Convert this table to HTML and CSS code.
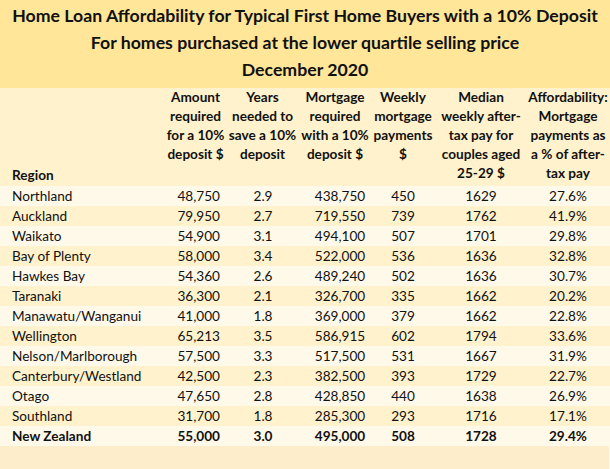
FILE: index.html
```html
<!DOCTYPE html>
<html lang="en">
<head>
<meta charset="utf-8">
<title>Home Loan Affordability</title>
<link rel="stylesheet" href="styles.css">
</head>
<body>
<div class="sheet">
  <div class="title-band">
    <div class="title-line">Home Loan Affordability for Typical First Home Buyers with a 10% Deposit</div>
    <div class="title-line">For homes purchased at the lower quartile selling price</div>
    <div class="title-line">December 2020</div>
  </div>
  <table class="data">
    <colgroup>
      <col class="c-region"><col class="c-amount"><col class="c-years"><col class="c-mort"><col class="c-weekly"><col class="c-median"><col class="c-aff">
    </colgroup>
    <thead>
      <tr class="head">
        <th class="region">Region</th>
        <th>Amount<br>required<br>for a 10%<br>deposit $</th>
        <th>Years<br>needed to<br>save a 10%<br>deposit</th>
        <th>Mortgage<br>required<br>with a 10%<br>deposit $</th>
        <th>Weekly<br>mortgage<br>payments<br>$</th>
        <th>Median<br>weekly after-<br>tax pay for<br>couples aged<br>25-29 $</th>
        <th>Affordability:<br>Mortgage<br>payments as<br>a % of after-<br>tax pay</th>
      </tr>
    </thead>
    <tbody>
      <tr class="light"><td class="region">Northland</td><td class="amt">48,750</td><td class="yrs">2.9</td><td class="mort">438,750</td><td class="wk">450</td><td class="med">1629</td><td class="aff">27.6%</td></tr>
      <tr class="dark"><td class="region">Auckland</td><td class="amt">79,950</td><td class="yrs">2.7</td><td class="mort">719,550</td><td class="wk">739</td><td class="med">1762</td><td class="aff">41.9%</td></tr>
      <tr class="light"><td class="region">Waikato</td><td class="amt">54,900</td><td class="yrs">3.1</td><td class="mort">494,100</td><td class="wk">507</td><td class="med">1701</td><td class="aff">29.8%</td></tr>
      <tr class="dark"><td class="region">Bay of Plenty</td><td class="amt">58,000</td><td class="yrs">3.4</td><td class="mort">522,000</td><td class="wk">536</td><td class="med">1636</td><td class="aff">32.8%</td></tr>
      <tr class="light"><td class="region">Hawkes Bay</td><td class="amt">54,360</td><td class="yrs">2.6</td><td class="mort">489,240</td><td class="wk">502</td><td class="med">1636</td><td class="aff">30.7%</td></tr>
      <tr class="dark"><td class="region">Taranaki</td><td class="amt">36,300</td><td class="yrs">2.1</td><td class="mort">326,700</td><td class="wk">335</td><td class="med">1662</td><td class="aff">20.2%</td></tr>
      <tr class="light"><td class="region">Manawatu/Wanganui</td><td class="amt">41,000</td><td class="yrs">1.8</td><td class="mort">369,000</td><td class="wk">379</td><td class="med">1662</td><td class="aff">22.8%</td></tr>
      <tr class="dark"><td class="region">Wellington</td><td class="amt">65,213</td><td class="yrs">3.5</td><td class="mort">586,915</td><td class="wk">602</td><td class="med">1794</td><td class="aff">33.6%</td></tr>
      <tr class="light"><td class="region">Nelson/Marlborough</td><td class="amt">57,500</td><td class="yrs">3.3</td><td class="mort">517,500</td><td class="wk">531</td><td class="med">1667</td><td class="aff">31.9%</td></tr>
      <tr class="dark"><td class="region">Canterbury/Westland</td><td class="amt">42,500</td><td class="yrs">2.3</td><td class="mort">382,500</td><td class="wk">393</td><td class="med">1729</td><td class="aff">22.7%</td></tr>
      <tr class="light"><td class="region">Otago</td><td class="amt">47,650</td><td class="yrs">2.8</td><td class="mort">428,850</td><td class="wk">440</td><td class="med">1638</td><td class="aff">26.9%</td></tr>
      <tr class="dark"><td class="region">Southland</td><td class="amt">31,700</td><td class="yrs">1.8</td><td class="mort">285,300</td><td class="wk">293</td><td class="med">1716</td><td class="aff">17.1%</td></tr>
      <tr class="light total"><td class="region">New Zealand</td><td class="amt">55,000</td><td class="yrs">3.0</td><td class="mort">495,000</td><td class="wk">508</td><td class="med">1728</td><td class="aff">29.4%</td></tr>
    </tbody>
  </table>
</div>
</body>
</html>
```

FILE: styles.css
```css
html, body {
  margin: 0;
  padding: 0;
}

body {
  width: 610px;
  height: 469px;
  overflow: hidden;
  background: #fdedca;
  font-family: Lato, "Noto Sans", "Liberation Sans", sans-serif;
  color: #111111;
}

.sheet {
  width: 610px;
  height: 469px;
  background: #fdedca;
  box-shadow: inset -1px 0 #fff9ec;
}

.title-band {
  background: #ffe699;
  height: 88px;
  box-sizing: border-box;
  padding-top: 2px;
  text-align: center;
  font-weight: 700;
  font-size: 17.7px;
  line-height: 27px;
}

.title-line {
  white-space: nowrap;
}

.data {
  width: 610px;
  border-collapse: collapse;
  table-layout: fixed;
  font-size: 13.6px;
}

.c-region { width: 166px; }
.c-amount { width: 59px; }
.c-years { width: 75px; }
.c-mort { width: 70px; }
.c-weekly { width: 66px; }
.c-median { width: 90px; }
.c-aff { width: 84px; }

.head {
  background: #fff2cc;
  height: 98px;
}

.head th {
  padding: 0;
  vertical-align: top;
  text-align: center;
  font-weight: 700;
  line-height: 19px;
  white-space: nowrap;
}

.head th.region {
  vertical-align: bottom;
  text-align: left;
  padding: 0 0 1px 12px;
}

tbody tr {
  height: 20px;
}

tbody td {
  padding: 0;
  line-height: 20px;
  white-space: nowrap;
}

tr.light { background: #fff9e9; }
tr.dark { background: #fff2cc; }
tr.total { font-weight: 700; }

td.region {
  padding-left: 12px;
}

td.amt {
  text-align: right;
  padding-right: 5px;
}

td.yrs {
  text-align: center;
  padding-left: 1px;
}

td.mort {
  text-align: center;
  padding-left: 10px;
}

td.wk {
  text-align: center;
}

td.med {
  text-align: center;
}

td.aff {
  text-align: center;
}
```
